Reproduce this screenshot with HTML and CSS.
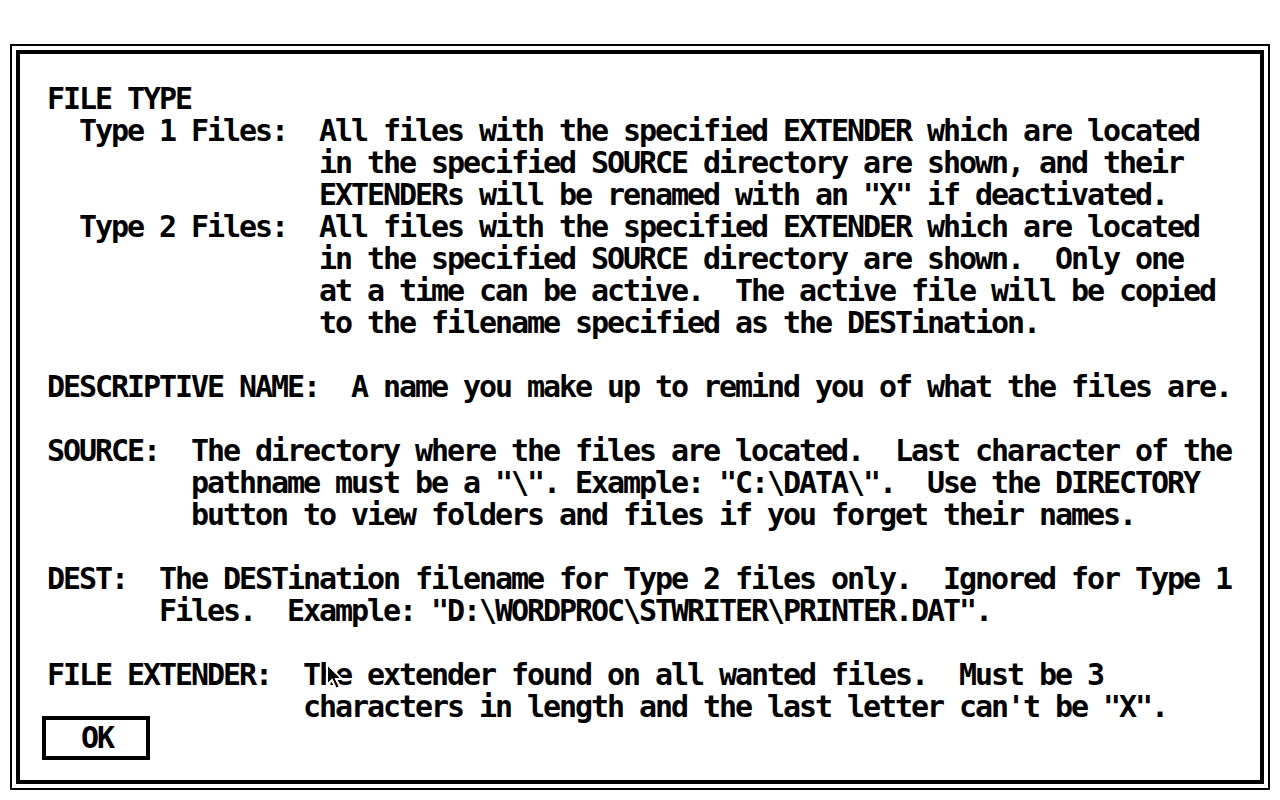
FILE: index.html
```html
<!DOCTYPE html>
<html>
<head>
<meta charset="utf-8">
<link rel="stylesheet" href="styles.css">
</head>
<body>
<div class="frame">
  <div class="inner">
<pre class="text">FILE TYPE
  Type 1 Files:  All files with the specified EXTENDER which are located
                 in the specified SOURCE directory are shown, and their
                 EXTENDERs will be renamed with an "X" if deactivated.
  Type 2 Files:  All files with the specified EXTENDER which are located
                 in the specified SOURCE directory are shown.  Only one
                 at a time can be active.  The active file will be copied
                 to the filename specified as the DESTination.

DESCRIPTIVE NAME:  A name you make up to remind you of what the files are.

SOURCE:  The directory where the files are located.  Last character of the
         pathname must be a "\". Example: "C:\DATA\".  Use the DIRECTORY
         button to view folders and files if you forget their names.

DEST:  The DESTination filename for Type 2 files only.  Ignored for Type 1
       Files.  Example: "D:\WORDPROC\STWRITER\PRINTER.DAT".

FILE EXTENDER:  The extender found on all wanted files.  Must be 3
                characters in length and the last letter can't be "X".</pre>
    <div class="ok">OK</div>
  </div>
</div>
<svg class="cursor" width="20" height="30" viewBox="0 0 20 30">
  <polygon points="1,1 1,22 6,17 10,26 14,24 10,16 16,16" fill="#000" stroke="#fff" stroke-width="2" stroke-linejoin="miter"/>
</svg>
</body>
</html>
```

FILE: styles.css
```css
html, body {
  margin: 0;
  padding: 0;
  background: #fff;
}
body {
  position: relative;
  width: 1280px;
  height: 800px;
  overflow: hidden;
}
.frame {
  box-sizing: border-box;
  margin: 44px 0 0 10px;
  width: 1260px;
  height: 746px;
  border: 2px solid #000;
  padding: 4px;
}
.inner {
  box-sizing: border-box;
  height: 100%;
  border: 4px solid #000;
  padding-top: 29px;
}
.text, .ok {
  font-family: "DejaVu Sans Mono", "Liberation Mono", monospace;
  font-weight: bold;
  font-size: 30px;
  letter-spacing: -2.06px;
  color: #000;
}
.text {
  margin: 0;
  padding-left: 27px;
  line-height: 32px;
  white-space: pre;
}
.ok {
  box-sizing: border-box;
  margin: -7px 0 0 22px;
  width: 108px;
  height: 44px;
  border: 4px solid #000;
  padding: 4px 0 0 2px;
  text-align: center;
  line-height: 28px;
}
.cursor {
  position: absolute;
  left: 326px;
  top: 663px;
}
```
